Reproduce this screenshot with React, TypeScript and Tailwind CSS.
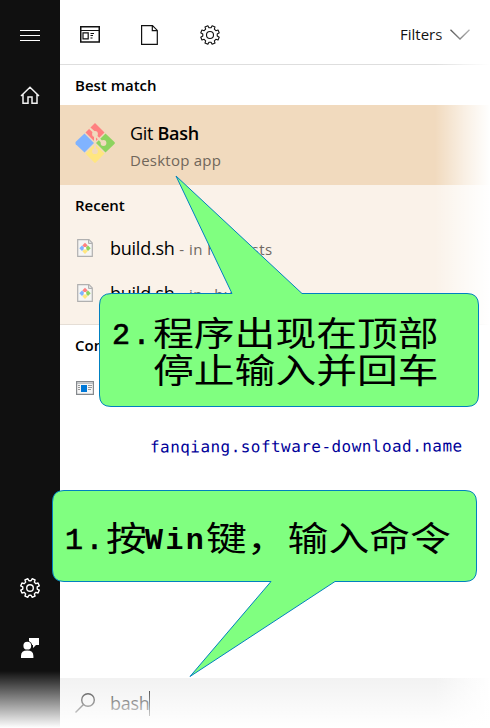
import type { ReactNode } from "react";

function gearPath(cx: number, cy: number): string {
  const pts: string[] = [];
  for (let i = 0; i < 8; i++) {
    const base = 22.5 + i * 45;
    const steps: [number, number][] = [
      [-14, 7.3],
      [-9.5, 9.5],
      [9.5, 9.5],
      [14, 7.3],
    ];
    for (const [d, r] of steps) {
      const a = ((base + d) * Math.PI) / 180;
      pts.push(`${(cx + Math.cos(a) * r).toFixed(2)} ${(cy + Math.sin(a) * r).toFixed(2)}`);
    }
  }
  return `M${pts.join("L")}Z`;
}

function Gear({ hole, width }: { hole: number; width: number }) {
  return (
    <svg className="h-5 w-5" viewBox="0 0 20 20" fill="none" stroke="currentColor" strokeWidth={width} strokeLinejoin="round">
      <path d={gearPath(10, 10)} />
      <circle cx="10" cy="10" r={hole} />
    </svg>
  );
}

function GitLogo() {
  return (
    <svg className="h-10 w-10 shrink-0" viewBox="0 0 40 40">
      <path d="M20 0L29.5 9.5L20 19L10.5 9.5Z" fill="#ff8080" />
      <path d="M9.5 10.5L19 20L9.5 29.5L0.8 21.2Q0 20 0.8 18.8Z" fill="#80b3ff" />
      <path d="M30.5 10.5L39.4 19Q40.4 20 39.4 21L30.5 29.5L21 20Z" fill="#8dd35f" />
      <path d="M20 21L29.5 30.5L21 39.3Q20 40.4 19 39.3L10.5 30.5Z" fill="#ffe680" />
      <path d="M14.5 5L20 10V28M20 12L28 20" fill="none" stroke="#f1dabe" strokeWidth="2" />
      <circle cx="20" cy="11" r="2.9" fill="#f1dabe" />
      <circle cx="28.5" cy="20" r="2.9" fill="#f1dabe" />
      <circle cx="20" cy="28.2" r="2.9" fill="#f1dabe" />
    </svg>
  );
}

function ScriptIcon() {
  return (
    <svg className="h-[18px] w-4 shrink-0" viewBox="0 0 16 18">
      <path d="M.7 .7H12L15.3 4V17.3H.7Z" fill="#f5f5f4" stroke="#b0b0b0" strokeWidth="1.2" />
      <path d="M11.5 1V4.5H15" fill="#ddd" stroke="#b0b0b0" />
      <path d="M8 3.7L10.7 6.4L8 9.1L5.3 6.4Z" fill="#ff8080" />
      <path d="M5 6.5L7.7 9.2L5 11.9L2.3 9.2Z" fill="#80b3ff" />
      <path d="M11 6.5L13.7 9.2L11 11.9L8.3 9.2Z" fill="#8dd35f" />
      <path d="M8 9.5L10.7 12.2L8 14.9L5.3 12.2Z" fill="#ffe680" />
      <circle cx="8" cy="9.2" r="1.2" fill="#fff" />
    </svg>
  );
}

function RecentRow({ path }: { path: string }) {
  return (
    <div className="flex h-[45px] items-center pl-[17px]">
      <ScriptIcon />
      <span className="ml-[17px] w-[65px] whitespace-pre pt-0.5 text-[18px] tracking-[-0.25px] text-black">build.sh</span>
      <span className="whitespace-pre pt-[3px] text-[15px] tracking-[0.45px] text-[#6f6962]"> - in {path}</span>
    </div>
  );
}

function Heading({ children }: { children: ReactNode }) {
  return <h2 className="flex h-10 items-center pl-[15px] text-[15px] font-semibold text-black">{children}</h2>;
}

function Cjk({ children, width }: { children: string; width: string }) {
  return (
    <span className={`inline-block ${width}`}>
      <span className="inline-block origin-left scale-x-[1.2] font-['Noto_Sans_CJK_SC',sans-serif] text-[34px] font-normal">{children}</span>
    </span>
  );
}

function Latin({ children, width }: { children: string; width: string }) {
  return <span className={`inline-block pt-[5px] text-[30px] tracking-[2.4px] [-webkit-text-stroke:0.7px_black] ${width}`}>{children}</span>;
}

const callout = "whitespace-nowrap font-['Liberation_Mono','Noto_Sans_CJK_SC',monospace] leading-[37px] text-black";

export default function App() {
  return (
    <div className="relative flex h-[728px] w-[490px] overflow-hidden bg-white font-['Open_Sans','Noto_Sans',sans-serif]">
      <aside className="flex w-[60px] shrink-0 flex-col items-center bg-[#101010] text-white">
        <div className="mt-[30px] flex w-5 flex-col gap-1">
          <div className="h-px bg-white" />
          <div className="h-px bg-white" />
          <div className="h-px bg-white" />
        </div>
        <svg className="mt-[45px] h-[19px] w-5" viewBox="0 0 20 19" fill="none" stroke="#f2f2f2" strokeWidth="1.5">
          <path d="M1 10L10 1.3L19 10M3 8.5V17.2H8V11H12V17.2H17V8.5" />
        </svg>
        <div className="mt-[473px]">
          <Gear hole={3.3} width={1.4} />
        </div>
        <svg className="mt-10 h-5 w-5" viewBox="0 0 20 20">
          <path d="M9 0H19V7H16L13 10V7H9Z" fill="white" />
          <circle cx="7.5" cy="7.7" r="4.7" fill="#101010" />
          <circle cx="7.3" cy="7.7" r="3.9" fill="white" />
          <path d="M1 20V18Q1 12.6 7.2 12.6Q13.4 12.6 13.4 18V20Z" fill="white" />
        </svg>
      </aside>

      <main className="flex min-w-0 flex-1 flex-col">
        <header className="flex h-[65px] items-center border-b border-[#dedede] pt-[5px] pl-5 text-[#111]">
          <svg className="h-[17px] w-5" viewBox="0 0 20 17" fill="none" stroke="currentColor">
            <path d="M.75 .75H19.25V16H.75Z" strokeWidth="1.5" />
            <path d="M1 4.5H19M10.5 7.5H14M10.5 9.5H13M10.5 12H12.5" />
            <path d="M3 6.8H8.2V12.8H3Z" strokeWidth="1.2" />
          </svg>
          <svg className="ml-[41px] h-5 w-[17px]" viewBox="0 0 17 20" fill="none" stroke="currentColor" strokeWidth="1.2">
            <path d="M.6 .6H11.5L16.3 5.4V19.4H.6ZM11.3 .6V5.6H16.3" />
          </svg>
          <div className="ml-[42px]">
            <Gear hole={3.5} width={1.1} />
          </div>
          <span className="ml-[180px] w-[43px] text-[15px]">Filters</span>
          <svg className="ml-[7px] h-[11px] w-5" viewBox="0 0 20 11" fill="none" stroke="currentColor" strokeWidth="1.3">
            <path d="M.5 .7L10 10L19.5 .7" />
          </svg>
        </header>
        <Heading>Best match</Heading>
        <div className="flex h-20 items-center gap-[15px] bg-[#f1dabe] pb-1 pl-[15px]">
          <GitLogo />
          <div className="pt-[7px]">
            <div className="text-[18px] leading-[27px] tracking-[-0.3px] text-black">
              Git <b className="font-semibold">Bash</b>
            </div>
            <div className="text-[15px] leading-[27px] tracking-[0.25px] text-[#70665a]">Desktop app</div>
          </div>
        </div>
        <section className="h-[140px] border-b border-[#e5ded6] bg-[#faf2e9]">
          <Heading>Recent</Heading>
          <RecentRow path="hg_hosts" />
          <RecentRow path="_build" />
        </section>
        <Heading>Command</Heading>
        <div className="flex h-[45px] items-center pl-4">
          <svg className="h-[14px] w-[18px]" viewBox="0 0 18 14">
            <path d="M.6 .6H17.4V13.4H.6Z" fill="#f6f6f6" stroke="#85898d" strokeWidth="1.2" />
            <path d="M1 2.2H17" stroke="#a7abaf" />
            <rect x="5" y="4" width="6" height="7" fill="#0078d7" />
            <path d="M2 4.5H4M2 6.5H4M2 8.5H4M12 4.5H16M12 6.5H16M12 8.5H15" stroke="#999" />
          </svg>
        </div>
        <div className="relative z-10 pt-[25px] pl-[90px] font-['DejaVu_Sans_Mono',monospace] text-[16px] leading-6 tracking-[0.45px] whitespace-nowrap text-[#000099]">
          <div className="w-[312px] -rotate-[0.2deg]">fanqiang.software-download.name</div>
        </div>
        <footer className="mt-auto flex h-[50px] items-center bg-[#f0f0f0] pl-[15px] text-[#101010]">
          <svg className="h-5 w-5" viewBox="0 0 20 20" fill="none" stroke="currentColor" strokeWidth="1.4">
            <circle cx="13" cy="7" r="6.3" />
            <path d="M8.5 11.5L.5 19.5" />
          </svg>
          <span className="ml-[15px] w-[39px] text-[18px] tracking-[-0.25px]">bash</span>
          <div className="h-[25px] w-px bg-black" />
        </footer>
      </main>

      <div className="absolute top-0 right-0 h-full w-[55px] bg-linear-to-r from-white/0 via-white/60 via-55% to-white" />
      <div className="absolute bottom-0 left-0 h-[57px] w-full bg-linear-to-b from-white/0 to-white" />

      <svg className="absolute inset-0 h-[728px] w-[490px]" viewBox="0 0 490 728" fill="#80ff80" stroke="#0080c0">
        <path d="M111.5 293.5H232L176 176L302 293.5H467Q478.500 293.500 478.500 305V395Q478.500 406.500 467 406.500H111Q99.500 406.500 99.500 395V305Q99.500 293.500 111.500 293.500Z" />
        <path d="M64 490.500H465Q476.500 490.500 476.500 502V570Q476.500 581.500 465 581.500H335L190 676.500L271 581.500H64Q52.500 581.500 52.500 570V502Q52.500 490.500 64 490.500Z" />
      </svg>
      <div className={`absolute top-[313px] left-[112px] ${callout}`}>
        <div className="flex h-[37px]">
          <Latin width="w-[41px]">2.</Latin>
          <Cjk width="w-[286px]">程序出现在顶部</Cjk>
        </div>
        <div className="flex h-[37px] pl-[41px]">
          <Cjk width="w-[286px]">停止输入并回车</Cjk>
        </div>
      </div>
      <div className={`absolute top-[518px] left-[65px] flex ${callout}`}>
        <Latin width="w-[41px]">1.</Latin>
        <Cjk width="w-[39px]">按</Cjk>
        <span className="inline-block w-[61px] pt-[5px] text-[30px] font-bold tracking-[2.4px]">Win</span>
        <Cjk width="w-[245px]">键，输入命令</Cjk>
      </div>
    </div>
  );
}
